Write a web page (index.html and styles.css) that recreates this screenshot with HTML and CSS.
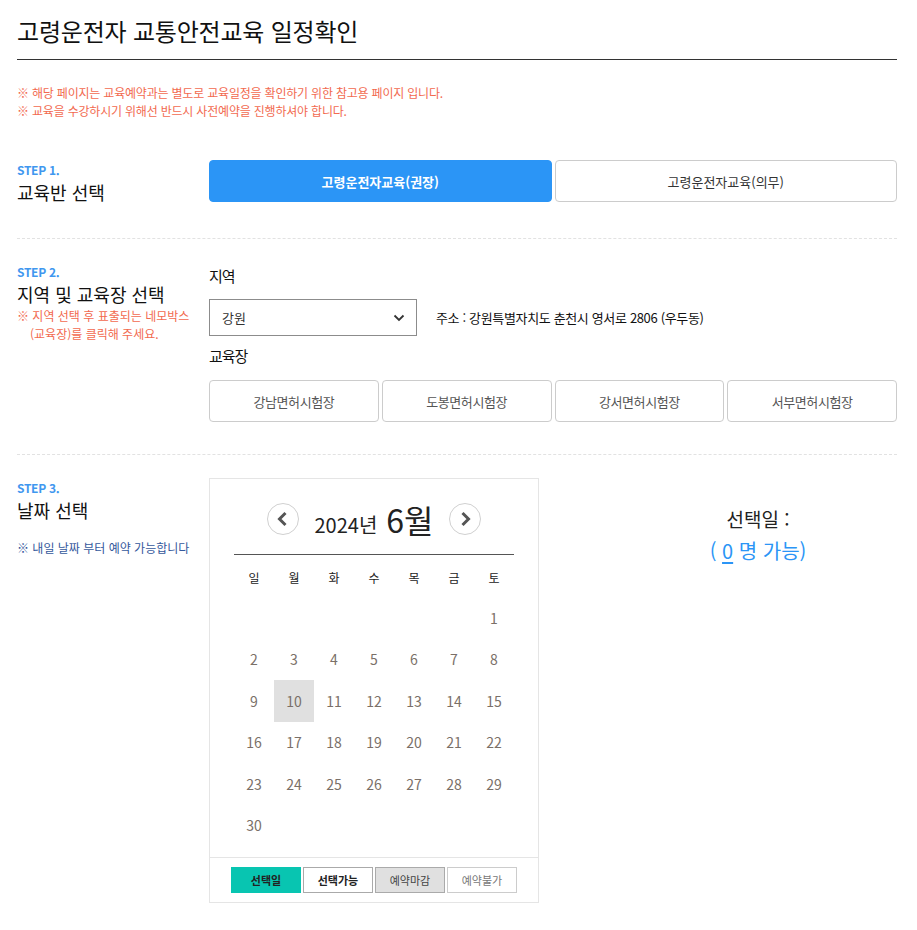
FILE: index.html
```html
<!DOCTYPE html>
<html lang="ko">
<head>
  <meta charset="UTF-8">
  <meta name="viewport" content="width=device-width, initial-scale=1.0"/>
  <title>고령운전자 교통안전교육 일정확인</title>
  <link rel="stylesheet" href="styles.css">
</head>
<body>
<div class="wrap">
  <h1 class="page-title">고령운전자 교통안전교육 일정확인</h1>

  <div class="notice">
    <p>※ 해당 페이지는 교육예약과는 별도로 교육일정을 확인하기 위한 참고용 페이지 입니다.</p>
    <p>※ 교육을 수강하시기 위해선 반드시 사전예약을 진행하셔야 합니다.</p>
  </div>

  <!-- STEP 1 -->
  <div class="step step1">
    <div class="step-head">
      <div class="step-no">STEP 1.</div>
      <div class="step-title">교육반 선택</div>
    </div>
    <div class="step-body">
      <div class="class-btns">
        <a class="class-btn on">고령운전자교육(권장)</a>
        <a class="class-btn">고령운전자교육(의무)</a>
      </div>
    </div>
  </div>

  <!-- STEP 2 -->
  <div class="step step2">
    <div class="step-head">
      <div class="step-no">STEP 2.</div>
      <div class="step-title">지역 및 교육장 선택</div>
      <p class="step-warn">※ 지역 선택 후 표출되는 네모박스<br><span class="indent">(교육장)를 클릭해 주세요.</span></p>
    </div>
    <div class="step-body">
      <div class="field-label">지역</div>
      <div class="area-row">
        <div class="select-box">
          <span>강원</span>
          <svg width="12" height="8" viewBox="0 0 12 8"><path d="M1.5 1.5 L6 6 L10.5 1.5" fill="none" stroke="#333" stroke-width="1.8"/></svg>
        </div>
        <div class="address">주소 : 강원특별자치도 춘천시 영서로 2806 (우두동)</div>
      </div>
      <div class="field-label">교육장</div>
      <div class="place-btns">
        <a class="place-btn">강남면허시험장</a>
        <a class="place-btn">도봉면허시험장</a>
        <a class="place-btn">강서면허시험장</a>
        <a class="place-btn">서부면허시험장</a>
      </div>
    </div>
  </div>

  <!-- STEP 3 -->
  <div class="step step3">
    <div class="step-head">
      <div class="step-no">STEP 3.</div>
      <div class="step-title">날짜 선택</div>
      <p class="step-info">※ 내일 날짜 부터 예약 가능합니다</p>
    </div>
    <div class="step-body cal-wrap">
      <div class="calendar">
        <div class="cal-head">
          <a class="cal-nav">
            <svg width="32" height="32" viewBox="0 0 32 32"><circle cx="16" cy="16" r="15.5" fill="#fff" stroke="#d0d0d0"/><path d="M18.5 10 L12.5 16 L18.5 22" fill="none" stroke="#555" stroke-width="3"/></svg>
          </a>
          <div class="cal-month"><span class="yy">2024년</span><span class="mm">6월</span></div>
          <a class="cal-nav">
            <svg width="32" height="32" viewBox="0 0 32 32"><circle cx="16" cy="16" r="15.5" fill="#fff" stroke="#d0d0d0"/><path d="M13.5 10 L19.5 16 L13.5 22" fill="none" stroke="#555" stroke-width="3"/></svg>
          </a>
        </div>
        <div class="cal-grid">
          <div class="wd">일</div><div class="wd">월</div><div class="wd">화</div><div class="wd">수</div><div class="wd">목</div><div class="wd">금</div><div class="wd">토</div>
          <div></div><div></div><div></div><div></div><div></div><div></div><div class="day">1</div>
          <div class="day">2</div><div class="day">3</div><div class="day">4</div><div class="day">5</div><div class="day">6</div><div class="day">7</div><div class="day">8</div>
          <div class="day">9</div><div class="day today">10</div><div class="day">11</div><div class="day">12</div><div class="day">13</div><div class="day">14</div><div class="day">15</div>
          <div class="day">16</div><div class="day">17</div><div class="day">18</div><div class="day">19</div><div class="day">20</div><div class="day">21</div><div class="day">22</div>
          <div class="day">23</div><div class="day">24</div><div class="day">25</div><div class="day">26</div><div class="day">27</div><div class="day">28</div><div class="day">29</div>
          <div class="day">30</div>
        </div>
        <div class="legend">
          <span class="lg lg-sel">선택일</span>
          <span class="lg lg-ok">선택가능</span>
          <span class="lg lg-full">예약마감</span>
          <span class="lg lg-no">예약불가</span>
        </div>
      </div>
      <div class="sel-info">
        <div class="sel-date">선택일 :</div>
        <div class="sel-count">( <u>0</u> 명 가능)</div>
      </div>
    </div>
  </div>
</div>
</body>
</html>
```

FILE: styles.css
```css
body {
  margin: 0;
  font-family: "Noto Sans CJK KR", "Noto Sans", sans-serif;
  color: #222;
  background: #fff;
}
a {
  cursor: pointer;
  text-decoration: none;
}
p {
  margin: 0;
}
.wrap {
  padding: 0 20px 0 17px;
}

.page-title {
  margin: 0;
  padding: 14px 0 11px;
  font-size: 24px;
  line-height: 34px;
  font-weight: 400;
  letter-spacing: -0.2px;
  color: #111;
  border-bottom: 1px solid #333;
}

.notice {
  margin-top: 24px;
  font-size: 12px;
  line-height: 18px;
  letter-spacing: -0.2px;
  color: #f26a4f;
}

/* steps */
.step {
  display: flex;
  border-bottom: 1px dashed #e2e2e2;
}
.step1 {
  padding: 40px 0 33px;
}
.step2 {
  padding: 23px 0 32px;
}
.step3 {
  padding: 23px 0 0;
  border-bottom: 0;
}
.step-head {
  width: 192px;
  flex-shrink: 0;
  padding-top: 2px;
}
.step-no {
  font-size: 12px;
  line-height: 16px;
  font-weight: 700;
  letter-spacing: -0.3px;
  color: #3f97ef;
}
.step-title {
  font-size: 18px;
  line-height: 26px;
  color: #111;
  margin-top: 1px;
}
.step-warn {
  font-size: 12px;
  line-height: 18px;
  color: #f26a4f;
}
.step-warn .indent {
  padding-left: 13px;
}
.step-info {
  margin-top: 16px;
  font-size: 12px;
  line-height: 18px;
  color: #34589c;
}
.step-body {
  flex: 1;
}
.step2 .step-body {
  padding-top: 3px;
}

/* step 1 */
.class-btns {
  display: grid;
  grid-template-columns: 1fr 1fr;
  gap: 3px;
}
.class-btn {
  height: 42px;
  display: flex;
  align-items: center;
  justify-content: center;
  border: 1px solid #ccc;
  border-radius: 4px;
  box-sizing: border-box;
  font-size: 13px;
  color: #333;
}
.class-btn.on {
  background: #2b95f6;
  border-color: #2b95f6;
  color: #fff;
  font-weight: 700;
}

/* step 2 */
.field-label {
  font-size: 15px;
  line-height: 22px;
  letter-spacing: -1px;
  color: #111;
}
.area-row {
  display: flex;
  align-items: center;
  margin: 12px 0 9px;
}
.select-box {
  width: 208px;
  height: 37px;
  box-sizing: border-box;
  border: 1px solid #8c8c8c;
  display: flex;
  align-items: center;
  justify-content: space-between;
  padding: 0 11px 0 12px;
  font-size: 13px;
  color: #333;
}
.address {
  margin-left: 19px;
  font-size: 13px;
  letter-spacing: -0.35px;
  color: #111;
}
.place-btns {
  display: grid;
  grid-template-columns: repeat(4, 1fr);
  gap: 3px;
  margin-top: 13px;
}
.place-btn {
  height: 42px;
  display: flex;
  align-items: center;
  justify-content: center;
  border: 1px solid #ccc;
  border-radius: 4px;
  box-sizing: border-box;
  font-size: 13px;
  letter-spacing: -0.4px;
  color: #555;
}

/* step 3 */
.cal-wrap {
  display: flex;
  align-items: flex-start;
}
.calendar {
  width: 330px;
  box-sizing: border-box;
  border: 1px solid #e5e5e5;
}
.cal-head {
  display: flex;
  align-items: center;
  justify-content: center;
  gap: 15px;
  padding-top: 24px;
  height: 32px;
}
.cal-nav {
  display: block;
  width: 32px;
  height: 32px;
}
.cal-nav svg {
  display: block;
}
.cal-month {
  color: #222;
  white-space: nowrap;
}
.cal-month .yy {
  font-size: 20px;
}
.cal-month .mm {
  margin-left: 9px;
  font-size: 32px;
  font-weight: 400;
}
.cal-grid {
  margin: 19px 24px 11px;
  border-top: 1px solid #555;
  padding-top: 3px;
  display: grid;
  grid-template-columns: repeat(7, 40px);
  grid-template-rows: 39px;
  grid-auto-rows: 41.5px;
}
.cal-grid .wd {
  display: flex;
  align-items: center;
  justify-content: center;
  font-size: 12px;
  color: #222;
}
.cal-grid .day {
  display: flex;
  align-items: center;
  justify-content: center;
  font-size: 14px;
  color: #7a7068;
}
.cal-grid .today {
  background: #e0e0e0;
}
.legend {
  border-top: 1px solid #e5e5e5;
  padding: 9px 0;
  display: flex;
  justify-content: center;
  gap: 2px;
}
.lg {
  width: 70px;
  height: 26px;
  box-sizing: border-box;
  display: flex;
  align-items: center;
  justify-content: center;
  font-size: 11px;
  border: 1px solid #aaa;
  color: #222;
}
.lg-sel {
  background: #08c5b1;
  border-color: #08c5b1;
  font-weight: 700;
}
.lg-ok {
  background: #fff;
  font-weight: 700;
}
.lg-full {
  background: #e0e0e0;
  color: #444;
}
.lg-no {
  background: #fff;
  border-color: #ccc;
  color: #777;
}
.sel-info {
  flex: 1;
  padding: 25px 0 0 80px;
  text-align: center;
}
.sel-date {
  font-size: 19px;
  line-height: 32px;
  color: #222;
}
.sel-count {
  font-size: 20px;
  line-height: 32px;
  color: #2b95f6;
}
.sel-count u {
  text-underline-offset: 3px;
}
```
